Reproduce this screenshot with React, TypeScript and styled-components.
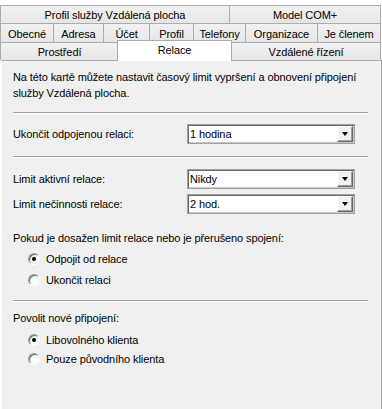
import { FC } from 'react';
import styled, { createGlobalStyle } from 'styled-components';

const GlobalStyle = createGlobalStyle`
  html, body { margin: 0; padding: 0; background: #fff; }
  body {
    font-family: "Liberation Sans", Arial, sans-serif;
    font-size: 11px;
    letter-spacing: -0.1px;
    color: #000;
  }
`;

const Sheet = styled.div`
  width: 382px;
  height: 409px;
  overflow: hidden;
  padding-top: 5px;
  box-sizing: border-box;
`;

const TabRow = styled.div<{ $h: number }>`
  display: flex;
  align-items: flex-start;
  height: ${(p) => p.$h}px;
  width: 381px;
`;

const Tab = styled.div<{ $w: number; $h: number; $last?: boolean }>`
  box-sizing: border-box;
  flex: none;
  width: ${(p) => p.$w}px;
  height: ${(p) => p.$h}px;
  border-top: 1px solid #acacac;
  border-left: 1px solid #acacac;
  border-right: ${(p) => (p.$last ? '1px solid #acacac' : 'none')};
  background: linear-gradient(#f2f2f2, #e6e6e6);
  display: flex;
  align-items: center;
  justify-content: center;
  white-space: nowrap;
  padding-top: 1px;
`;

const ActiveTab = styled.div<{ $w: number; $h: number }>`
  box-sizing: border-box;
  position: relative;
  z-index: 1;
  flex: none;
  width: ${(p) => p.$w}px;
  height: ${(p) => p.$h + 3}px;
  margin: -2px -1px 0 -1px;
  border: 1px solid #acacac;
  border-bottom: none;
  background: #fff;
  display: flex;
  justify-content: center;
  padding-top: 3px;
  white-space: nowrap;
`;

const Panel = styled.div`
  box-sizing: border-box;
  width: 381px;
  height: 350px;
  margin-left: 1px;
  border-top: 1px solid #acacac;
  border-left: 1px solid #fff;
  border-right: 1px solid #a0a0a0;
  background: #f0f0f0;
  padding: 8px 13px 0 11px;
`;

const Text = styled.div<{ $mt?: number }>`
  line-height: 16px;
  margin-top: ${(p) => p.$mt ?? 0}px;
  white-space: nowrap;
`;

const Separator = styled.div<{ $mt: number }>`
  height: 1px;
  margin-top: ${(p) => p.$mt}px;
  background: #a0a0a0;
  border-bottom: 1px solid #fff;
`;

const FieldRow = styled.div<{ $mt: number }>`
  display: grid;
  grid-template-columns: 174px 168px;
  align-items: center;
  height: 20px;
  margin-top: ${(p) => p.$mt}px;
`;

const Combo = styled.div`
  box-sizing: border-box;
  height: 20px;
  display: flex;
  border: 1px solid #a0a0a0;
  box-shadow: inset 1px 1px 0 #696969, inset -1px -1px 0 #c8c8c8;
  padding: 1px;
  background: #fff;
`;

const ComboValue = styled.div`
  flex: 1;
  padding-left: 1px;
  line-height: 16px;
`;

const ComboButton = styled.div`
  box-sizing: border-box;
  width: 16px;
  height: 16px;
  background: #f0f0f0;
  border: 1px solid;
  border-color: #fff #696969 #696969 #fff;
  box-shadow: inset -1px -1px 0 #a0a0a0;
  display: flex;
  align-items: center;
  justify-content: center;
`;

const Arrow = styled.div`
  width: 0;
  height: 0;
  border-left: 3.5px solid transparent;
  border-right: 3.5px solid transparent;
  border-top: 4px solid #000;
`;

const RadioRow = styled.div<{ $mt: number }>`
  display: flex;
  align-items: center;
  gap: 6px;
  height: 16px;
  margin-top: ${(p) => p.$mt}px;
  padding-left: 15px;
`;

const RadioDot = styled.div<{ $on?: boolean }>`
  box-sizing: border-box;
  width: 12px;
  height: 12px;
  border-radius: 50%;
  border: 1px solid;
  border-color: #9a9a9a #ffffff #ffffff #9a9a9a;
  box-shadow: inset 1px 1px 0 #6e6e6e;
  background: radial-gradient(circle at 60% 60%, #ffffff, #ececec);
  display: flex;
  align-items: center;
  justify-content: center;
  &::after {
    content: '';
    width: 4px;
    height: 4px;
    border-radius: 50%;
    background: ${(p) => (p.$on ? '#000' : 'transparent')};
  }
`;

const Dropdown: FC<{ value: string }> = ({ value }) => (
  <Combo>
    <ComboValue>{value}</ComboValue>
    <ComboButton>
      <Arrow />
    </ComboButton>
  </Combo>
);

const Radio: FC<{ label: string; on?: boolean; mt: number }> = ({ label, on, mt }) => (
  <RadioRow $mt={mt}>
    <RadioDot $on={on} />
    <span>{label}</span>
  </RadioRow>
);

const row2 = [
  ['Obecné', 53],
  ['Adresa', 50],
  ['Účet', 46],
  ['Profil', 44],
  ['Telefony', 52],
  ['Organizace', 72],
  ['Je členem', 64],
] as const;

export default function App() {
  return (
    <>
      <GlobalStyle />
      <Sheet>
        <TabRow $h={18}>
          <Tab $w={229} $h={18}>Profil služby Vzdálená plocha</Tab>
          <Tab $w={152} $h={18} $last>Model COM+</Tab>
        </TabRow>
        <TabRow $h={19}>
          {row2.map(([name, w], i) => (
            <Tab key={name} $w={w} $h={19} $last={i === row2.length - 1}>
              {name}
            </Tab>
          ))}
        </TabRow>
        <TabRow $h={18}>
          <Tab $w={118} $h={18}>Prostředí</Tab>
          <ActiveTab $w={115} $h={18}>Relace</ActiveTab>
          <Tab $w={150} $h={18} $last>Vzdálené řízení</Tab>
        </TabRow>
        <Panel>
          <Text>Na této kartě můžete nastavit časový limit vypršení a obnovení připojení</Text>
          <Text>služby Vzdálená plocha.</Text>
          <Separator $mt={11} />
          <FieldRow $mt={10}>
            <span>Ukončit odpojenou relaci:</span>
            <Dropdown value="1 hodina" />
          </FieldRow>
          <Separator $mt={12} />
          <FieldRow $mt={11}>
            <span>Limit aktivní relace:</span>
            <Dropdown value="Nikdy" />
          </FieldRow>
          <FieldRow $mt={5}>
            <span>Limit nečinnosti relace:</span>
            <Dropdown value="2 hod." />
          </FieldRow>
          <Text $mt={16}>Pokud je dosažen limit relace nebo je přerušeno spojení:</Text>
          <Radio label="Odpojit od relace" on mt={5} />
          <Radio label="Ukončit relaci" mt={5} />
          <Separator $mt={12} />
          <Text $mt={8}>Povolit nové připojení:</Text>
          <Radio label="Libovolného klienta" on mt={6} />
          <Radio label="Pouze původního klienta" mt={3} />
        </Panel>
      </Sheet>
    </>
  );
}
